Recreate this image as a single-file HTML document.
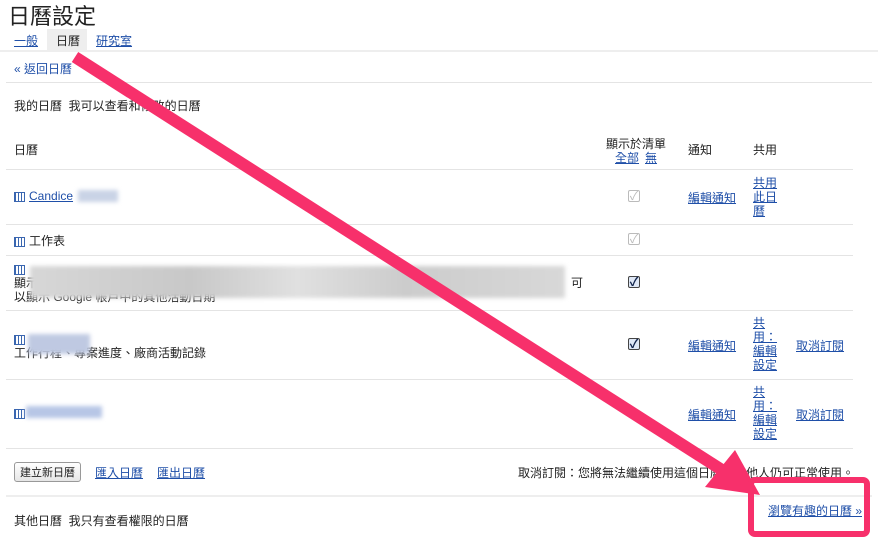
<!DOCTYPE html>
<html><head><meta charset="utf-8"><style>
body{margin:0;width:878px;height:541px;overflow:hidden;background:#fff;font-family:"Liberation Sans","Noto Sans CJK TC",sans-serif;font-size:12px;color:#222;position:relative}
.a{position:absolute;white-space:nowrap}
a,.l{color:#1f4fa8;text-decoration:underline}
.hr{position:absolute;height:1px;background:#e4e4e4}
.ic{display:inline-block;width:9px;height:8px;border:1px solid #3a66b0;background:repeating-linear-gradient(90deg,#3a66b0 0 1px,#fff 1px 3px);vertical-align:middle;margin-right:4px}
.cb{position:absolute;width:10px;height:10px;border:1px solid #bbb;border-radius:2px;font-size:12px;line-height:10px;text-align:center;color:#bbb}
.cb.on{border-color:#444;color:#10224a;background:#dfe8f6;font-weight:bold}
.blur{position:absolute;filter:blur(2px)}
</style></head><body>
<div class="a" style="left:8px;top:-1px;font-size:22px;color:#222">日曆設定</div>
<div class="a" style="left:47px;top:29px;width:40px;height:21px;background:#eee"></div>
<div class="a l" style="left:14px;top:32px;font-size:12px">一般</div>
<div class="a" style="left:56px;top:32px">日曆</div>
<div class="a l" style="left:96px;top:32px">研究室</div>
<div class="hr" style="left:0;top:50px;width:878px;height:2px;background:#eee"></div>
<div class="a l" style="left:14px;top:60px;text-decoration:none">« 返回日曆</div>
<div class="hr" style="left:6px;top:82px;width:866px"></div>
<div class="a" style="left:14px;top:97px">我的日曆 &nbsp;我可以查看和修改的日曆</div>
<div class="a" style="left:14px;top:141px">日曆</div>
<div class="a" style="left:606px;top:135px">顯示於清單</div>
<div class="a l" style="left:615px;top:149px">全部</div><div class="a l" style="left:645px;top:149px">無</div>
<div class="a" style="left:688px;top:141px">通知</div>
<div class="a" style="left:753px;top:141px">共用</div>
<div class="hr" style="left:6px;top:169px;width:847px"></div>
<div class="a" style="left:14px;top:189px"><span class="ic"></span><span class="l">Candice</span></div>
<div class="blur" style="left:78px;top:190px;width:40px;height:12px;background:#c9d3e6"></div>
<div class="cb" style="left:628px;top:190px">✓</div>
<div class="a l" style="left:688px;top:189px">編輯通知</div>
<div class="a l" style="left:753px;top:176px;line-height:14px;white-space:normal;width:26px">共用此日曆</div>
<div class="hr" style="left:6px;top:224px;width:847px"></div>
<div class="a" style="left:14px;top:232px"><span class="ic"></span>工作表</div>
<div class="cb" style="left:628px;top:233px">✓</div>
<div class="hr" style="left:6px;top:255px;width:847px"></div>
<div class="a" style="left:14px;top:262px"><span class="ic"></span></div>
<div class="a" style="left:14px;top:274px">顯示</div>
<div class="a" style="left:14px;top:288px">以顯示 Google 帳戶中的其他活動日期</div>
<div class="a" style="left:571px;top:274px">可</div>
<div class="blur" style="left:30px;top:266px;width:535px;height:32px;background:linear-gradient(90deg,#d7d7d7,#c8c8c8 30%,#e0e0e0 50%,#ccc 70%,#d8d8d8)"></div>
<div class="cb on" style="left:628px;top:276px">✓</div>
<div class="hr" style="left:6px;top:310px;width:847px"></div>
<div class="a" style="left:14px;top:332px"><span class="ic"></span></div>
<div class="a" style="left:14px;top:344px">工作行程、專案進度、廠商活動記錄</div>
<div class="blur" style="left:28px;top:334px;width:62px;height:20px;background:#bfc9e2"></div>
<div class="cb on" style="left:628px;top:338px">✓</div>
<div class="a l" style="left:688px;top:337px">編輯通知</div>
<div class="a l" style="left:753px;top:316px;line-height:14px;white-space:normal;width:26px">共用：編輯設定</div>
<div class="a l" style="left:796px;top:337px">取消訂閱</div>
<div class="hr" style="left:6px;top:379px;width:847px"></div>
<div class="a" style="left:14px;top:406px"><span class="ic"></span></div>
<div class="blur" style="left:26px;top:406px;width:76px;height:12px;background:#b7c6e6"></div>
<div class="a l" style="left:688px;top:406px">編輯通知</div>
<div class="a l" style="left:753px;top:385px;line-height:14px;white-space:normal;width:26px">共用：編輯設定</div>
<div class="a l" style="left:796px;top:406px">取消訂閱</div>
<div class="hr" style="left:6px;top:448px;width:847px"></div>
<div class="a" style="left:14px;top:462px;border:1px solid #999;border-radius:3px;padding:1px 5px;background:linear-gradient(#fff,#e6e6e6);font-size:11px">建立新日曆</div>
<div class="a l" style="left:95px;top:464px">匯入日曆</div>
<div class="a l" style="left:157px;top:464px">匯出日曆</div>
<div class="a" style="left:518px;top:464px">取消訂閱：您將無法繼續使用這個日曆，其他人仍可正常使用。</div>
<div class="hr" style="left:6px;top:495px;width:866px;height:2px;background:#eee"></div>
<div class="a" style="left:14px;top:512px">其他日曆 &nbsp;我只有查看權限的日曆</div>
<div class="a l" style="left:768px;top:502px">瀏覽有趣的日曆 »</div>
<svg class="a" style="left:0;top:0" width="878" height="541">
<line x1="75" y1="57" x2="722" y2="470" stroke="#f7306b" stroke-width="12"/>
<polygon points="760,495 705,487 735,450" fill="#f7306b"/>
<rect x="751" y="480" width="116" height="54" rx="4" fill="none" stroke="#f7306b" stroke-width="6"/>
</svg>
</body></html>
